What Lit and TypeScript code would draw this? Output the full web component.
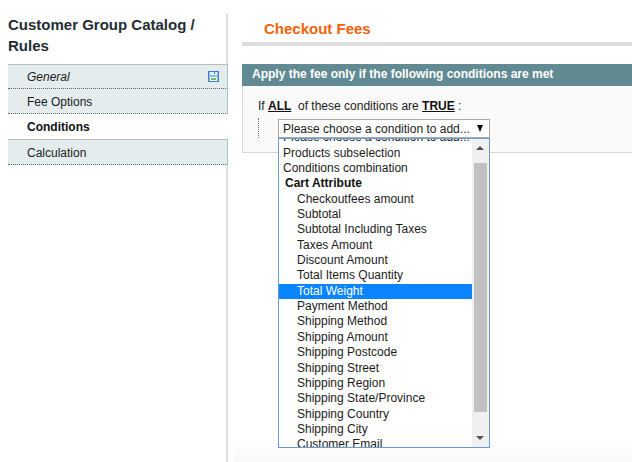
import { LitElement, html, css } from 'lit';
import { customElement } from 'lit/decorators.js';

const options = [
  { label: 'Please choose a condition to add...', depth: 0 },
  { label: 'Products subselection', depth: 0 },
  { label: 'Conditions combination', depth: 0 },
  { label: 'Cart Attribute', depth: 0, group: true },
  { label: 'Checkoutfees amount', depth: 1 },
  { label: 'Subtotal', depth: 1 },
  { label: 'Subtotal Including Taxes', depth: 1 },
  { label: 'Taxes Amount', depth: 1 },
  { label: 'Discount Amount', depth: 1 },
  { label: 'Total Items Quantity', depth: 1 },
  { label: 'Total Weight', depth: 1, selected: true },
  { label: 'Payment Method', depth: 1 },
  { label: 'Shipping Method', depth: 1 },
  { label: 'Shipping Amount', depth: 1 },
  { label: 'Shipping Postcode', depth: 1 },
  { label: 'Shipping Street', depth: 1 },
  { label: 'Shipping Region', depth: 1 },
  { label: 'Shipping State/Province', depth: 1 },
  { label: 'Shipping Country', depth: 1 },
  { label: 'Shipping City', depth: 1 },
  { label: 'Customer Email', depth: 1 },
];

@customElement('app-root')
export class AppRoot extends LitElement {
  static styles = css`
    :host {
      display: block;
      width: 632px;
      height: 462px;
      overflow: hidden;
      background: #fff;
      font-family: 'Liberation Sans', Arial, sans-serif;
      font-size: 12px;
      color: #1c1c1c;
    }
    .page {
      display: flex;
      height: 462px;
      padding-top: 14px;
      box-sizing: border-box;
    }
    .side {
      width: 218px;
      margin-left: 8px;
      flex: none;
      border-right: 2px solid #dedede;
    }
    .side h3 {
      margin: 0;
      height: 50px;
      font-size: 15px;
      line-height: 21px;
      font-weight: bold;
      color: #1f2d33;
    }
    .tabs {
      margin-right: -2px;
      border-top: 1px solid #bbb;
    }
    .tab {
      display: flex;
      align-items: center;
      justify-content: space-between;
      height: 25px;
      box-sizing: border-box;
      padding: 1px 8px 0 19px;
      background: #e4eced;
      border-bottom: 1px dotted #5d6a6e;
      border-right: 1px solid #a9c0c5;
    }
    .tab.general {
      height: 24px;
      padding-top: 0;
      font-style: italic;
    }
    .tab.active {
      height: 26px;
      padding-top: 0;
      background: #fff;
      border-right: none;
      border-bottom: 1px solid #bbb;
      font-weight: bold;
      color: #111;
    }
    .main {
      flex: 1;
      min-width: 0;
      margin-left: 14px;
    }
    .main h3 {
      margin: 0;
      height: 32px;
      padding: 6px 0 0 22px;
      box-sizing: border-box;
      font-size: 15px;
      line-height: 18px;
      font-weight: bold;
      color: #f26208;
      border-bottom: 4px solid #dedede;
    }
    .section-head {
      margin-top: 18px;
      height: 22px;
      padding-left: 10px;
      background: #618a93;
      color: #fff;
      font-weight: bold;
      line-height: 21px;
    }
    .section-body {
      position: relative;
      height: 67px;
      box-sizing: border-box;
      padding: 13px 0 0 15px;
      background: #fafafa;
      border: 1px solid #d6d6d6;
      border-top: none;
      border-right: none;
    }
    .rule {
      line-height: 15px;
    }
    .rule b {
      color: #111;
      text-decoration: underline;
    }
    .children {
      margin-top: 4px;
      padding-left: 19px;
      border-left: 1px dotted #777;
      height: 20px;
    }
    .select {
      position: relative;
      top: 1px;
      display: flex;
      align-items: center;
      width: 212px;
      height: 19px;
      box-sizing: border-box;
      border: 1px solid #aaa;
      background: #fff;
      padding-left: 4px;
    }
    .arrow {
      position: absolute;
      right: 6px;
      top: 5px;
      width: 0;
      height: 0;
      border-left: 3px solid transparent;
      border-right: 3px solid transparent;
      border-top: 7px solid #111;
    }
    .drop {
      position: absolute;
      left: 35px;
      top: 52px;
      width: 212px;
      height: 310px;
      box-sizing: border-box;
      border: 1px solid #6c9bd2;
      background: #fff;
      overflow: hidden;
      display: flex;
    }
    .list {
      flex: 1;
      min-width: 0;
      margin-top: -8.85px;
    }
    .opt {
      height: 15.37px;
      line-height: 15.37px;
      padding-left: 4px;
      white-space: nowrap;
    }
    .opt.d1 {
      padding-left: 18px;
    }
    .opt.group {
      font-weight: bold;
      padding-left: 6px;
      color: #111;
    }
    .opt.sel {
      background: #0a84ff;
      color: #fff;
    }
    .bar {
      position: relative;
      flex: none;
      width: 17px;
      background: #f0f0f0;
    }
    .thumb {
      position: absolute;
      left: 2px;
      top: 24px;
      width: 13px;
      height: 249px;
      background: #c1c1c1;
    }
    .up,
    .down {
      position: absolute;
      left: 4px;
      width: 0;
      height: 0;
      border-left: 4px solid transparent;
      border-right: 4px solid transparent;
    }
    .up {
      top: 7px;
      border-bottom: 4px solid #505050;
    }
    .down {
      bottom: 7px;
      border-top: 4px solid #505050;
    }
    .foot {
      height: 17px;
      margin: 292px 0 0 -8px;
      background: linear-gradient(#fdfdfd, #f9f9f9);
    }
  `;

  render() {
    return html`
      <div class="page">
        <div class="side">
          <h3>Customer Group Catalog / Rules</h3>
          <div class="tabs">
            <div class="tab general">
              General
              <svg width="11" height="11" viewBox="0 0 11 11">
                <rect x="0.5" y="0.5" width="10" height="10" fill="#8dbcec" stroke="#3f7fd0" />
                <rect x="2" y="1" width="7" height="3" fill="#e6f0fa" />
                <rect x="6" y="1" width="1" height="2" fill="#3f7fd0" />
                <rect x="2" y="6" width="7" height="4" fill="#f4f8f0" />
                <rect x="3" y="7" width="5" height="2" fill="#6fc04a" />
              </svg>
            </div>
            <div class="tab">Fee Options</div>
            <div class="tab active">Conditions</div>
            <div class="tab">Calculation</div>
          </div>
        </div>
        <div class="main">
          <h3>Checkout Fees</h3>
          <div class="section-head">Apply the fee only if the following conditions are met</div>
          <div class="section-body">
            <div class="rule">If <b>ALL</b> &nbsp;of these conditions are <b>TRUE</b> :</div>
            <div class="children">
              <div class="select">Please choose a condition to add...<span class="arrow"></span></div>
            </div>
            <div class="drop">
              <div class="list">
                ${options.map(
                  (o) => html`<div class="opt ${o.depth ? 'd1' : ''} ${o.group ? 'group' : ''} ${o.selected ? 'sel' : ''}">${o.label}</div>`
                )}
              </div>
              <div class="bar">
                <span class="up"></span>
                <span class="thumb"></span>
                <span class="down"></span>
              </div>
            </div>
          </div>
          <div class="foot"></div>
        </div>
      </div>
    `;
  }
}
